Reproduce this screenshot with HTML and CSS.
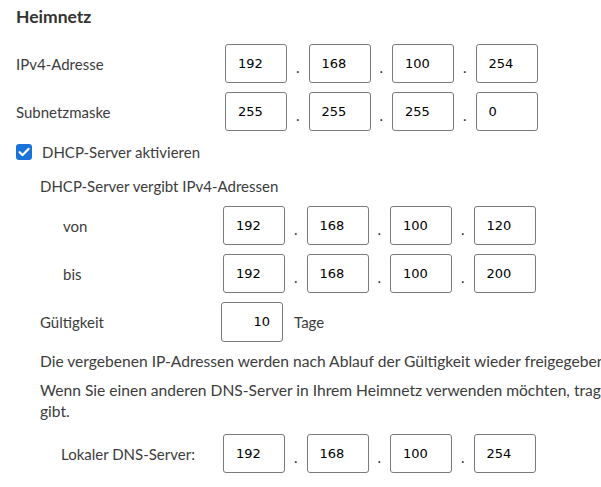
FILE: index.html
```html
<!DOCTYPE html>
<html lang="de">
<head>
<meta charset="utf-8">
<title>Heimnetz</title>
<link rel="stylesheet" href="styles.css">
</head>
<body>
<div class="page">
  <h2 class="title">Heimnetz</h2>

  <div class="row row-top">
    <span class="label label-main">IPv4-Adresse</span>
    <div class="ip">
      <span class="box">192</span><span class="sep">.</span>
      <span class="box">168</span><span class="sep">.</span>
      <span class="box">100</span><span class="sep">.</span>
      <span class="box">254</span>
    </div>
  </div>

  <div class="row row-next">
    <span class="label label-main">Subnetzmaske</span>
    <div class="ip">
      <span class="box">255</span><span class="sep">.</span>
      <span class="box">255</span><span class="sep">.</span>
      <span class="box">255</span><span class="sep">.</span>
      <span class="box">0</span>
    </div>
  </div>

  <label class="check">
    <span class="checkbox">
      <svg width="16" height="16" viewBox="0 0 16 16"><rect x="0" y="0" width="16" height="16" rx="3" fill="#1a73d9"/><path d="M3.6 8.2 L6.6 11.1 L12.5 4.9" fill="none" stroke="#fff" stroke-width="2.2" stroke-linecap="round" stroke-linejoin="round"/></svg>
    </span>
    <span class="check-text">DHCP-Server aktivieren</span>
  </label>

  <div class="sub">
    <p class="line intro">DHCP-Server vergibt IPv4-Adressen</p>

    <div class="row row-range">
      <span class="label label-range">von</span>
      <div class="ip">
        <span class="box">192</span><span class="sep">.</span>
        <span class="box">168</span><span class="sep">.</span>
        <span class="box">100</span><span class="sep">.</span>
        <span class="box">120</span>
      </div>
    </div>

    <div class="row row-next">
      <span class="label label-range">bis</span>
      <div class="ip">
        <span class="box">192</span><span class="sep">.</span>
        <span class="box">168</span><span class="sep">.</span>
        <span class="box">100</span><span class="sep">.</span>
        <span class="box">200</span>
      </div>
    </div>

    <div class="row row-next">
      <span class="label label-valid">Gültigkeit</span>
      <span class="box box-num">10</span>
      <span class="unit">Tage</span>
    </div>

    <p class="line para first">Die vergebenen IP-Adressen werden nach Ablauf der Gültigkeit wieder freigegeben.</p>
    <p class="line para">Wenn Sie einen anderen DNS-Server in Ihrem Heimnetz verwenden möchten, tragen Sie hier die IP-Adresse ein, die die FRITZ!Box als lokalen DNS-Server bekannt<br>gibt.</p>

    <div class="row row-dns">
      <span class="label label-dns">Lokaler DNS-Server:</span>
      <div class="ip">
        <span class="box">192</span><span class="sep">.</span>
        <span class="box">168</span><span class="sep">.</span>
        <span class="box">100</span><span class="sep">.</span>
        <span class="box">254</span>
      </div>
    </div>
  </div>
</div>
</body>
</html>
```

FILE: styles.css
```css
html, body {
  margin: 0;
  padding: 0;
  background: #ffffff;
  overflow: hidden;
}

.page {
  padding: 6px 0 0 16px;
  font-family: "Lato", "Liberation Sans", sans-serif;
  font-size: 15px;
  color: #3c3c3c;
}

.title {
  margin: 0;
  font-size: 17.5px;
  line-height: 22px;
  font-weight: bold;
  color: #333;
}

.row {
  display: flex;
  align-items: center;
  height: 39px;
}

.row-top { margin-top: 16px; }
.row-next { margin-top: 9px; }
.row-range { margin-top: 10px; }
.row-dns { margin-top: 12px; }

.label { flex: none; line-height: 20px; }
.label-main { width: 209px; }
.label-range { width: 160px; padding-left: 23px; }
.label-valid { width: 181px; }
.label-dns { width: 162px; padding-left: 21px; }

.ip {
  display: flex;
  align-items: center;
}

.box {
  box-sizing: border-box;
  width: 62px;
  height: 39px;
  border: 1px solid #7a7a7a;
  border-radius: 3px;
  padding: 0 12px;
  display: flex;
  align-items: center;
  font-family: "DejaVu Sans", sans-serif;
  font-size: 13px;
  color: #000;
}

.box-num {
  justify-content: flex-end;
  height: 40px;
}

.sep {
  width: 21.5px;
  text-align: center;
  padding-top: 6px;
  color: #333;
}

.unit {
  margin-left: 11px;
}

.check {
  display: flex;
  align-items: center;
  margin-top: 11px;
  height: 20px;
}

.checkbox {
  display: flex;
  width: 16px;
  height: 16px;
}

.check-text {
  margin-left: 10px;
  line-height: 20px;
}

.sub {
  padding-left: 24px;
}

.line {
  margin: 0;
  white-space: nowrap;
}

.intro {
  margin-top: 14px;
  line-height: 20px;
}

.para {
  font-size: 15.6px;
  line-height: 21px;
  margin-top: 8px;
}

.para.first {
  margin-top: 10px;
}
```
